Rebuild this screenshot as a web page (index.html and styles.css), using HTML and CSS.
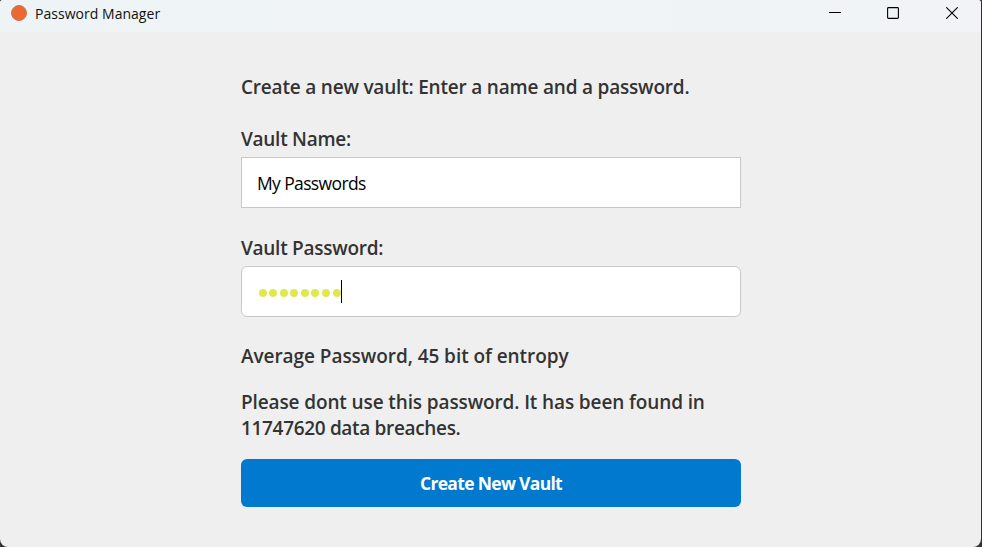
FILE: index.html
```
<!DOCTYPE html>
<html lang="en">
<head>
<meta charset="utf-8">
<title>Password Manager</title>
<link rel="stylesheet" href="styles.css">
</head>
<body>
<div class="window">
  <header class="titlebar">
    <span class="app-icon"></span>
    <span class="app-title">Password Manager</span>
    <div class="controls">
      <svg viewBox="0 0 12 12"><path d="M0 5.5H12"/></svg>
      <svg viewBox="0 0 12 12"><rect x=".6" y=".6" width="10.8" height="10.8" rx=".8"/></svg>
      <svg viewBox="0 0 12 12"><path d="M.3.3 11.7 11.7M11.7.3.3 11.7"/></svg>
    </div>
  </header>
  <main class="form">
    <p class="text intro"><span>Create a new vault: Enter a name and a password.</span></p>
    <p class="text label name-label"><span>Vault Name:</span></p>
    <div class="field"><span class="value">My Passwords</span></div>
    <p class="text label pass-label"><span>Vault Password:</span></p>
    <div class="field rounded">
      <div class="dots"><i></i><i></i><i></i><i></i><i></i><i></i><i></i><i></i></div><span class="caret"></span>
    </div>
    <p class="text strength"><span>Average Password, 45 bit of entropy</span></p>
    <p class="text warning"><span class="line1">Please dont use this password. It has been found in</span><br><span class="line2">11747620 data breaches.</span></p>
    <button class="create"><span>Create New Vault</span></button>
  </main>
</div>
</body>
</html>
```
FILE: styles.css
```
* { box-sizing: border-box; }
body {
  margin: 0;
  background: #303234;
  font-family: "Open Sans", "Noto Sans", sans-serif;
  overflow: hidden;
}
.window {
  width: 981px;
  height: 547px;
  background: #efefef;
  border-radius: 3px 3px 8px 8px;
  overflow: hidden;
}
.titlebar {
  height: 32px;
  padding: 0 23px 6px 11px;
  display: flex;
  align-items: center;
  background: linear-gradient(90deg, #eef4f5, #f1f3f6);
}
.app-icon {
  width: 16px;
  height: 16px;
  border-radius: 50%;
  background: #eb6834;
  border: 1px solid #d0724e;
}
.app-title {
  margin-left: 8px;
  padding-top: 2px;
  font-size: 14px;
  line-height: 20px;
  color: #111;
  letter-spacing: 0.03px;
  white-space: nowrap;
}
.controls { margin-left: auto; display: flex; gap: 47px; }
.controls svg:first-child { margin-right: -1px; }
.controls svg {
  width: 12px;
  height: 12px;
  display: block;
  fill: none;
  stroke: #000;
  stroke-width: 1.1;
}
.form { width: 500px; margin: 42px 0 0 241px; }
.text {
  margin: 0;
  font-size: 19px;
  font-weight: 600;
  line-height: 26px;
  color: #333;
  white-space: nowrap;
}
.intro { letter-spacing: -0.2px; }
.label { letter-spacing: -0.27px; }
.name-label { margin-top: 26px; }
.pass-label { margin-top: 27px; }
.field {
  margin-top: 5px;
  height: 51px;
  padding: 0 16px;
  display: flex;
  align-items: center;
  background: #fff;
  border: 1px solid #c8c8c8;
}
.rounded { border-radius: 6px; }
.value { margin-left: -1px; font-size: 17.5px; color: #000; line-height: 26px; letter-spacing: -0.63px; }
.dots { display: flex; gap: 2.6px; margin: 3px 0 0 0.5px; }
.dots i { width: 8px; height: 8px; border-radius: 50%; background: #dfe94f; }
.caret { width: 1px; height: 23px; margin-left: 0.4px; background: #000; }
.strength { margin-top: 26px; letter-spacing: -0.06px; }
.warning { margin-top: 20px; }
.line1 { letter-spacing: -0.12px; }
.line2 { letter-spacing: -0.33px; }
.create {
  display: block;
  width: 500px;
  height: 48px;
  margin-top: 18px;
  padding: 0;
  border: 0;
  border-radius: 6px;
  background: #0079ce;
  color: #fff;
  font: 700 17.5px/26px "Open Sans", "Noto Sans", sans-serif;
  letter-spacing: -0.68px;
}
```
